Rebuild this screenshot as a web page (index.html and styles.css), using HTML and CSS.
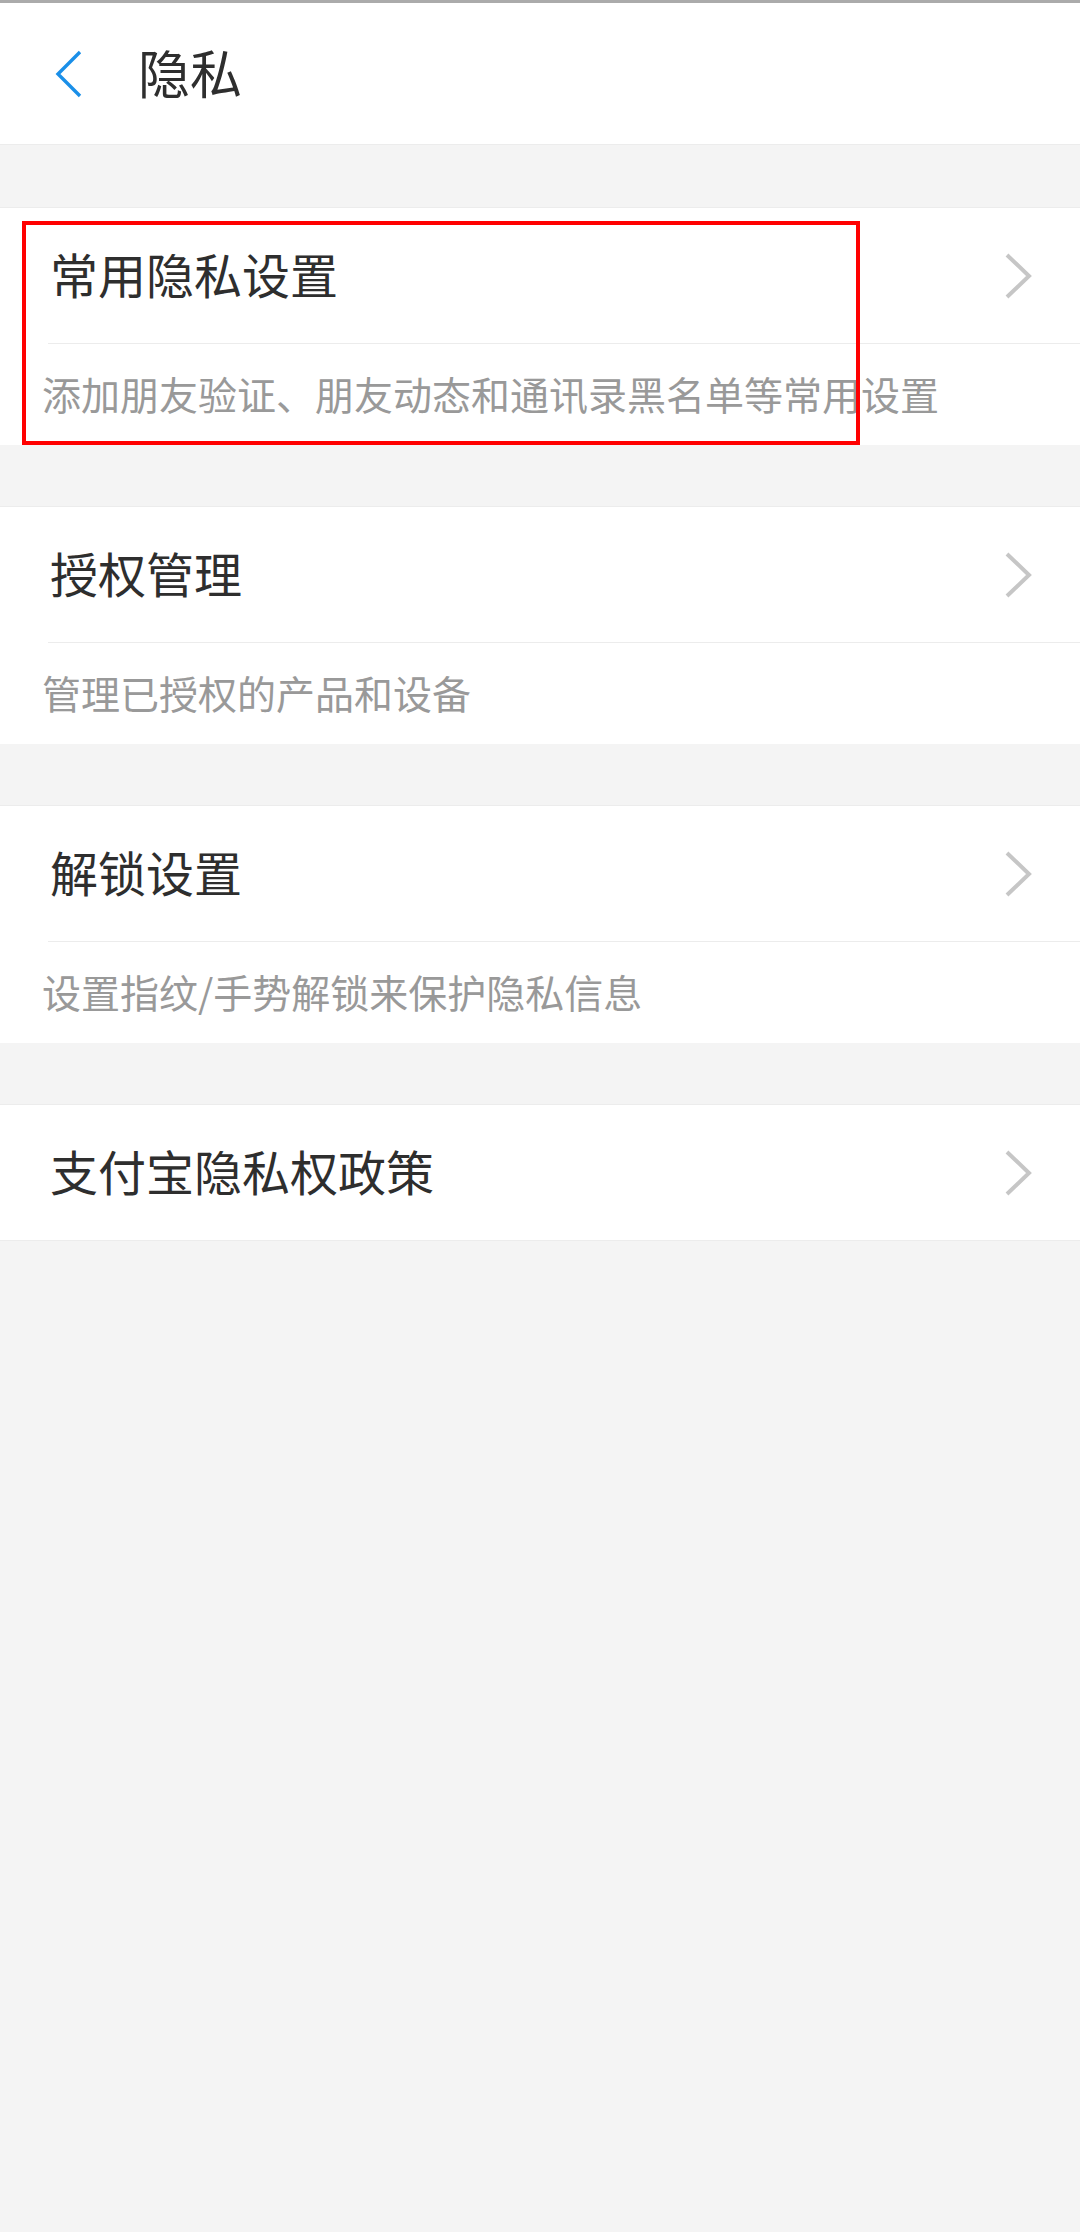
FILE: index.html
```html
<!DOCTYPE html>
<html lang="zh-CN">
<head>
  <meta charset="UTF-8">
  <title>隐私</title>
  <link rel="stylesheet" href="styles.css">
</head>
<body>

<div class="status-line"></div>

<div class="header">
  <svg class="back" width="30" height="48" viewBox="0 0 30 48">
    <polyline points="26,2 4,24 26,46" fill="none" stroke="#1a8fe8" stroke-width="3.4"/>
  </svg>
  <h1>隐私</h1>
</div>

<div class="card marked">
  <div class="row">
    <span class="title">常用隐私设置</span>
    <svg class="arrow" width="30" height="46" viewBox="0 0 30 46">
      <polyline points="3,2 25,23 3,44" fill="none" stroke="#c6c6c6" stroke-width="4"/>
    </svg>
  </div>
  <div class="divider"></div>
  <div class="desc">添加朋友验证、朋友动态和通讯录黑名单等常用设置</div>
  <div class="highlight"></div>
</div>

<div class="card">
  <div class="row">
    <span class="title">授权管理</span>
    <svg class="arrow" width="30" height="46" viewBox="0 0 30 46">
      <polyline points="3,2 25,23 3,44" fill="none" stroke="#c6c6c6" stroke-width="4"/>
    </svg>
  </div>
  <div class="divider"></div>
  <div class="desc">管理已授权的产品和设备</div>
</div>

<div class="card">
  <div class="row">
    <span class="title">解锁设置</span>
    <svg class="arrow" width="30" height="46" viewBox="0 0 30 46">
      <polyline points="3,2 25,23 3,44" fill="none" stroke="#c6c6c6" stroke-width="4"/>
    </svg>
  </div>
  <div class="divider"></div>
  <div class="desc">设置指纹/手势解锁来保护隐私信息</div>
</div>

<div class="card last">
  <div class="row">
    <span class="title">支付宝隐私权政策</span>
    <svg class="arrow" width="30" height="46" viewBox="0 0 30 46">
      <polyline points="3,2 25,23 3,44" fill="none" stroke="#c6c6c6" stroke-width="4"/>
    </svg>
  </div>
</div>

</body>
</html>
```

FILE: styles.css
```css
* {
  box-sizing: border-box;
}

html, body {
  margin: 0;
  padding: 0;
}

body {
  background: #f4f4f4;
  font-family: "Noto Sans CJK SC", "Noto Sans", sans-serif;
  min-height: 2232px;
}

.status-line {
  height: 3px;
  background: #ababab;
}

.header {
  height: 142px;
  background: #fff;
  border-bottom: 1px solid #ececec;
  display: flex;
  align-items: center;
}

.back {
  margin-left: 54px;
  margin-right: 54px;
}

.header h1 {
  margin: 0;
  font-size: 52px;
  font-weight: normal;
  color: #2e2e2e;
  line-height: 1;
  padding-bottom: 4px;
}

.card {
  position: relative;
  background: #fff;
  border-top: 1px solid #ececec;
  margin-top: 61px;
}

.card.marked {
  margin-top: 62px;
}

.card.last {
  border-bottom: 1px solid #ececec;
}

.row {
  height: 135px;
  display: flex;
  align-items: center;
  justify-content: space-between;
  padding-left: 50px;
  padding-right: 46px;
}

.title {
  font-size: 48px;
  color: #2e2e2e;
  line-height: 1;
  padding-bottom: 6px;
}

.divider {
  height: 1px;
  margin-left: 48px;
  background: #ececec;
}

.desc {
  height: 101px;
  display: flex;
  align-items: center;
  padding-left: 42px;
  padding-bottom: 2px;
  font-size: 39px;
  color: #999;
  line-height: 1;
}

.highlight {
  position: absolute;
  top: 13px;
  left: 22px;
  width: 838px;
  height: 224px;
  border: 4px solid #ff0000;
}
```
